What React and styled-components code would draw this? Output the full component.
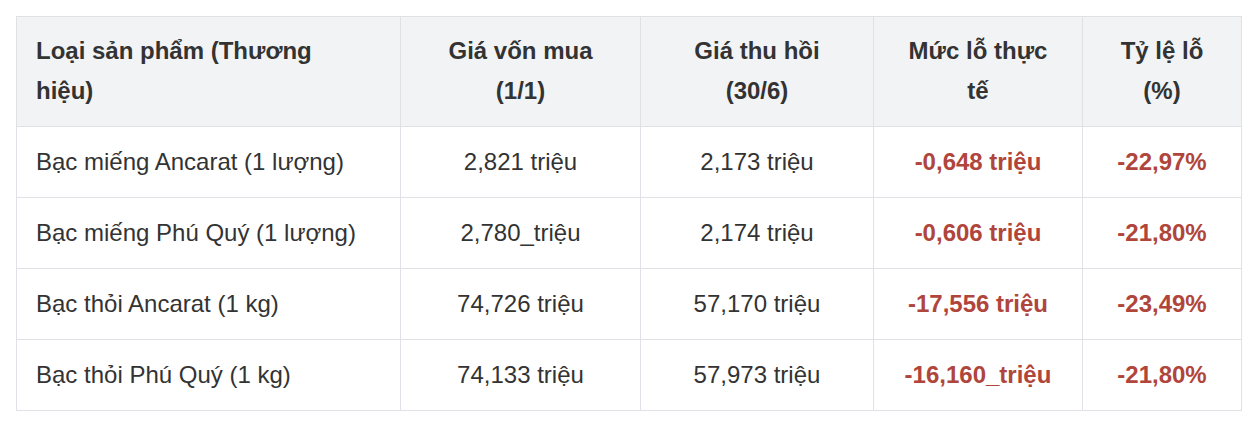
import React from "react";
import styled, { createGlobalStyle } from "styled-components";

const GlobalStyle = createGlobalStyle`
  body {
    margin: 0;
    background: #fff;
    font-family: "Liberation Sans", Arial, sans-serif;
    color: #333;
  }
`;

const Wrap = styled.div`
  padding: 16px;
`;

const Table = styled.table`
  width: 1225px;
  border-collapse: collapse;
  table-layout: fixed;
  font-size: 24px;
  line-height: 40px;
`;

const Th = styled.th`
  background: #f2f3f5;
  border: 1px solid #dfe1e6;
  padding: ${(p) => (p.$left ? "14px 30px 15px 19px" : "14px 24px 15px")};
  font-weight: bold;
  color: #333;
  text-align: ${(p) => (p.$left ? "left" : "center")};
  vertical-align: middle;
`;

const Td = styled.td`
  border: 1px solid #dfe1e6;
  padding: ${(p) => (p.$left ? "15px 20px 15px 19px" : "15px 20px")};
  height: 40px;
  text-align: ${(p) => (p.$left ? "left" : "center")};
  color: ${(p) => (p.$loss ? "#b0453b" : "#333")};
  font-weight: ${(p) => (p.$loss ? "bold" : "normal")};
  vertical-align: middle;
`;

const rows = [
  ["Bạc miếng Ancarat (1 lượng)", "2,821 triệu", "2,173 triệu", "-0,648 triệu", "-22,97%"],
  ["Bạc miếng Phú Quý (1 lượng)", "2,780_triệu", "2,174 triệu", "-0,606 triệu", "-21,80%"],
  ["Bạc thỏi Ancarat (1 kg)", "74,726 triệu", "57,170 triệu", "-17,556 triệu", "-23,49%"],
  ["Bạc thỏi Phú Quý (1 kg)", "74,133 triệu", "57,973 triệu", "-16,160_triệu", "-21,80%"],
];

export default function App() {
  return (
    <Wrap>
      <GlobalStyle />
      <Table>
        <colgroup>
          <col style={{ width: 384 }} />
          <col style={{ width: 240 }} />
          <col style={{ width: 233 }} />
          <col style={{ width: 209 }} />
          <col style={{ width: 159 }} />
        </colgroup>
        <thead>
          <tr>
            <Th $left>Loại sản phẩm (Thương hiệu)</Th>
            <Th>Giá vốn mua (1/1)</Th>
            <Th>Giá thu hồi (30/6)</Th>
            <Th>Mức lỗ thực tế</Th>
            <Th>Tỷ lệ lỗ (%)</Th>
          </tr>
        </thead>
        <tbody>
          {rows.map((r) => (
            <tr key={r[0]}>
              <Td $left>{r[0]}</Td>
              <Td>{r[1]}</Td>
              <Td>{r[2]}</Td>
              <Td $loss>{r[3]}</Td>
              <Td $loss>{r[4]}</Td>
            </tr>
          ))}
        </tbody>
      </Table>
    </Wrap>
  );
}
